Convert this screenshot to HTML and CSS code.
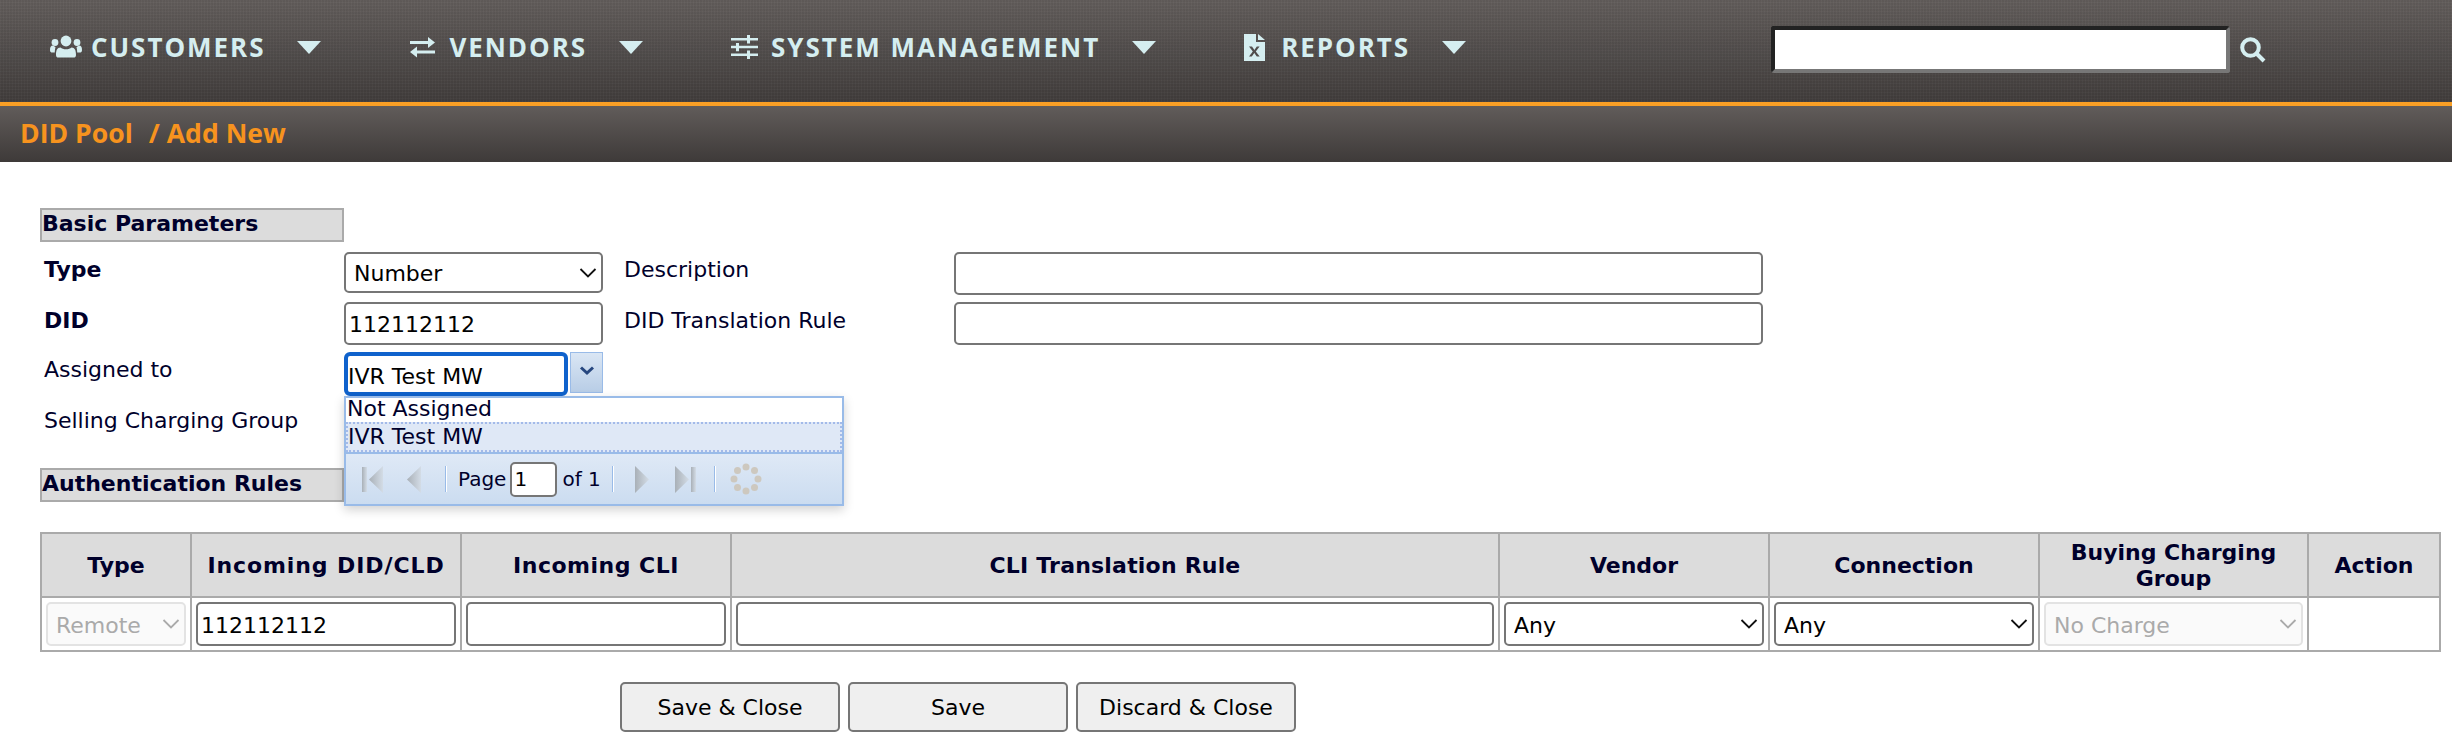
FILE: index.html
```html
<!DOCTYPE html>
<html lang="en">
<head>
<meta charset="utf-8">
<title>DID Pool / Add New</title>
<link rel="stylesheet" href="styles.css">
</head>
<body>
<svg class="defs" aria-hidden="true"><defs><linearGradient id="pgGrad" x1="0" y1="0" x2="1" y2="0"><stop offset="0" stop-color="#a9b0b7"/><stop offset="1" stop-color="#d3dce6"/></linearGradient></defs></svg>
<header class="topbar">
  <nav class="nav">
    <a class="nav-item">
      <svg class="nav-icon icon-users" viewBox="0 0 32 24"><circle cx="16" cy="6" r="5.4"/><circle cx="5" cy="7.5" r="3.4"/><circle cx="27" cy="7.5" r="3.4"/><path d="M8.5 22.5c-1.6 0-2.5-1-2.5-2.6 0-4.400 1.200-7.400 4.500-7.400 1.200 1 3.200 1.800 5.500 1.800s4.300-.8 5.500-1.800c3.300 0 4.500 3 4.500 7.400 0 1.600-.9 2.600-2.500 2.600z"/><path d="M5.500 12c-.3 1.600-.7 3.300-.7 5.600H2.400C.9 17.600 0 16.700 0 15.200c0-3 .8-4.600 3-4.600.7.700 1.500 1.100 2.500 1.400zM26.500 12c.3 1.600.7 3.300.7 5.600h2.400c1.500 0 2.400-.9 2.400-2.400 0-3-.8-4.600-3-4.600-.7.700-1.500 1.100-2.500 1.400z"/></svg>
      <span class="nav-label">CUSTOMERS</span><i class="nav-caret"></i>
    </a>
    <a class="nav-item">
      <svg class="nav-icon icon-exch" viewBox="0 0 27 22"><path d="M1 5h18V1l7 5.500-7 5.500V8H1zM26 11.500v3H8V10.500L1 16l7 5.500v-4h18z"/></svg>
      <span class="nav-label">VENDORS</span><i class="nav-caret"></i>
    </a>
    <a class="nav-item">
      <svg class="nav-icon icon-sliders" viewBox="0 0 27 24"><path d="M0 3h16V0h3v3h8v2.500h-8v3h-3v-3H0zM0 10.800h5V8h3v2.800h19v2.500H8v3H5v-3H0zM0 18.500h16v-3h3v3h8V21h-8v3h-3v-3H0z"/></svg>
      <span class="nav-label">SYSTEM MANAGEMENT</span><i class="nav-caret"></i>
    </a>
    <a class="nav-item">
      <svg class="nav-icon icon-file" viewBox="0 0 21 27"><path fill-rule="evenodd" d="M0 0h12v8h9v19H0zM14 0l7 6h-7zM5 12.500l3.800 5-3.800 5h2.800l2.500-3.500 2.500 3.500h2.900l-3.900-5 3.800-5h-2.800l-2.400 3.400-2.400-3.400z"/></svg>
      <span class="nav-label">REPORTS</span><i class="nav-caret"></i>
    </a>
  </nav>
  <div class="search">
    <input class="search-input" type="text" aria-label="Search">
    <svg class="search-icon" viewBox="0 0 26 26"><circle cx="10.500" cy="10.500" r="8.300"/><path d="M16.500 16.500l7.500 7.500"/></svg>
  </div>
</header>
<div class="crumbs"><span>DID Pool</span><span class="crumb-sep">/ Add New</span></div>

<main class="content">
  <h2 class="section-title">Basic Parameters</h2>
  <div class="form-grid">
    <label class="lbl lbl-b">Type</label>
    <div class="select-wrap type-sel"><select class="field sel"><option>Number</option></select><svg class="chev" viewBox="0 0 18 10"><path d="M1.500 1l7.500 7.500L16.500 1"/></svg></div>
    <label class="lbl lbl-desc">Description</label>
    <input class="field wide" type="text">

    <label class="lbl lbl-b lbl-did">DID</label>
    <input class="field" type="text" value="112112112">
    <label class="lbl lbl-desc lbl-did">DID Translation Rule</label>
    <input class="field wide" type="text">

    <label class="lbl">Assigned to</label>
    <div class="combo">
      <input class="combo-input" type="text" value="IVR Test MW">
      <div class="combo-btn"><svg viewBox="0 0 16 10"><path d="M2 1.500l6 5.500 6-5.500"/></svg></div>
      <div class="dropdown">
        <div class="dd-item">Not Assigned</div>
        <div class="dd-item dd-sel">IVR Test MW</div>
        <div class="pager">
          <svg class="pg pg-first" viewBox="0 0 21 29"><rect x="0" y="2" width="5" height="25"/><path d="M21 1v27L7 14.500z"/></svg>
          <svg class="pg pg-prev" viewBox="0 0 14 29"><path d="M14 1v27L0 14.500z"/></svg>
          <i class="pg-sep sep1"></i>
          <span class="pg-txt">Page</span>
          <input class="pg-input" type="text" value="1">
          <span class="pg-txt">of 1</span>
          <i class="pg-sep sep2"></i>
          <svg class="pg pg-next" viewBox="0 0 14 29"><path d="M0 1v27l14-13.500z"/></svg>
          <svg class="pg pg-last" viewBox="0 0 21 29"><path d="M0 1v27l14-13.500z"/><rect x="16" y="2" width="5" height="25"/></svg>
          <i class="pg-sep sep3"></i>
          <svg class="pg-load" viewBox="0 0 32 32"><circle cx="16" cy="4" r="3.500"/><circle cx="24.500" cy="7.500" r="3.500"/><circle cx="28" cy="16" r="3.500"/><circle cx="24.500" cy="24.500" r="3.500"/><circle cx="16" cy="28" r="3.500"/><circle cx="7.500" cy="24.500" r="3.500"/><circle cx="4" cy="16" r="3.500"/><circle cx="7.500" cy="7.500" r="3.500"/></svg>
        </div>
      </div>
    </div>
    <span class="filler"></span>

    <label class="lbl">Selling Charging Group</label>
  </div>

  <h2 class="section-title">Authentication Rules</h2>
  <table class="rules">
    <colgroup>
      <col class="c1"><col class="c2"><col class="c3"><col class="c4"><col class="c5"><col class="c6"><col class="c7"><col class="c8">
    </colgroup>
    <thead>
      <tr><th>Type</th><th class="wide-a">Incoming DID/CLD</th><th class="wide-b">Incoming CLI</th><th class="wide-c">CLI Translation Rule</th><th>Vendor</th><th>Connection</th><th>Buying Charging Group</th><th>Action</th></tr>
    </thead>
    <tbody>
      <tr>
        <td><div class="select-wrap"><select class="field sel" disabled><option>Remote</option></select><svg class="chev chev-off" viewBox="0 0 18 10"><path d="M1.500 1l7.500 7.500L16.500 1"/></svg></div></td>
        <td><input class="field" type="text" value="112112112"></td>
        <td><input class="field" type="text"></td>
        <td><input class="field" type="text"></td>
        <td><div class="select-wrap"><select class="field sel"><option>Any</option></select><svg class="chev" viewBox="0 0 18 10"><path d="M1.500 1l7.500 7.500L16.500 1"/></svg></div></td>
        <td><div class="select-wrap"><select class="field sel"><option>Any</option></select><svg class="chev" viewBox="0 0 18 10"><path d="M1.500 1l7.500 7.500L16.500 1"/></svg></div></td>
        <td><div class="select-wrap"><select class="field sel" disabled><option>No Charge</option></select><svg class="chev chev-off" viewBox="0 0 18 10"><path d="M1.500 1l7.500 7.500L16.500 1"/></svg></div></td>
        <td></td>
      </tr>
    </tbody>
  </table>
  <div class="actions">
    <button class="btn" type="button">Save &amp; Close</button>
    <button class="btn" type="button">Save</button>
    <button class="btn" type="button">Discard &amp; Close</button>
  </div>
</main>
</body>
</html>
```
FILE: styles.css
```css
* { box-sizing: border-box; }
html, body { margin: 0; padding: 0; background: #fff; }
body {
  font-family: "DejaVu Sans", Verdana, sans-serif;
  font-size: 22px;
  color: #00002b;
  overflow: hidden;
}
.defs { width: 0; height: 0; display: block; }

/* top navigation */
.topbar {
  height: 106px;
  border-bottom: 4px solid #f99f25;
  display: flex;
  align-items: flex-start;
  background:
    repeating-linear-gradient(90deg, rgba(255,255,255,.018) 0 1px, rgba(0,0,0,.018) 1px 3px),
    repeating-linear-gradient(0deg, rgba(255,255,255,.018) 0 1px, rgba(0,0,0,.018) 1px 3px),
    linear-gradient(#625d5b, #403c3b);
}
.nav { display: flex; align-items: center; height: 94px; padding-left: 50px; width: 1771px; }
.nav-item { display: flex; align-items: center; color: #d5eef0; margin-right: 88px; }
.nav-icon { fill: #d5eef0; display: block; margin-right: 12px; }
.icon-users { width: 32px; height: 24px; margin-right: 9px; }
.icon-exch { width: 27px; height: 22px; margin-right: 13px; }
.icon-sliders { width: 27px; height: 24px; margin-right: 13px; }
.icon-file { width: 21px; height: 27px; margin-right: 16px; }
.nav-label {
  font-family: "Open Sans", sans-serif;
  font-weight: 700;
  font-size: 26px;
  line-height: 34px;
  letter-spacing: 1.950px;
  white-space: nowrap;
}
.nav-caret {
  width: 0; height: 0;
  margin-left: 32px;
  border-left: 12px solid transparent;
  border-right: 12px solid transparent;
  border-top: 13px solid #d5eef0;
}
.search { display: flex; align-items: center; padding-top: 26px; }
.search-input {
  width: 459px; height: 47px;
  border-style: solid;
  border-width: 4px;
  border-color: #222 #777 #777 #222;
  border-radius: 3px;
  background: #fff;
}
.search-icon { width: 26px; height: 26px; margin-left: 10px; fill: none; stroke: #d5eef0; stroke-width: 4; }

.crumbs {
  height: 56px;
  padding: 0 0 2px 20px;
  display: flex;
  align-items: center;
  gap: 16px;
  font-family: "Open Sans", sans-serif;
  font-weight: 700;
  font-size: 26.600px;
  color: #f7931e;
  background: linear-gradient(#615c5a, #3e3a39);
}

/* form */
.content { padding: 46px 12px 0 40px; }
.section-title {
  margin: 0;
  width: 304px;
  height: 34px;
  border: 2px solid #aaa;
  background: #dcdcdc;
  padding-left: 0;
  font-size: 22px;
  line-height: 28px;
  font-weight: 700;
  white-space: nowrap;
}
.form-grid {
  display: grid;
  grid-template-columns: 304px 259px 351px 809px;
  grid-template-rows: 43px 43px 44px 72px;
  row-gap: 7px;
  margin-top: 10px;
  height: 216px;
}
.lbl { padding: 4px 0 0 4px; line-height: 28px; white-space: nowrap; }
.lbl-b { font-weight: 700; }
.lbl-desc { padding-left: 21px; }
.lbl-did { padding-top: 5px; }
.field {
  display: block;
  width: 100%;
  height: 100%;
  border: 2px solid #767676;
  border-radius: 5px;
  background: #fff;
  padding: 2px 3px 0;
  font: 22px "DejaVu Sans", Verdana, sans-serif;
  color: #000;
  outline: 0;
}
.sel { appearance: none; -webkit-appearance: none; padding-left: 8px; }
.sel:disabled { border-color: #e3e3e3; background: #fafafa; color: #aaa; opacity: 1; }
.select-wrap { position: relative; height: 100%; }
.type-sel { height: 41px; }
.chev {
  position: absolute; right: 6px; top: 50%;
  width: 18px; height: 10px; margin-top: -5px;
  fill: none; stroke: #111; stroke-width: 1.800;
  pointer-events: none;
}
.chev-off { stroke: #aaa; }
.filler { grid-column: span 2; }

.combo { position: relative; display: flex; align-items: stretch; gap: 2px; z-index: 2; }
.combo-input {
  width: 224px;
  border: 4px solid #0f62cc;
  border-radius: 6px;
  padding: 5px 0 0 0;
  font: 22px "DejaVu Sans", Verdana, sans-serif;
  color: #000;
  outline: 0;
}
.combo-btn {
  width: 33px; height: 41px;
  border: 1px solid #99bbe8;
  background: linear-gradient(#dae6f4, #b8cde6);
  display: flex; justify-content: center; padding-top: 13px;
}
.combo-btn svg { width: 16px; height: 10px; fill: none; stroke: #27477f; stroke-width: 3; }
.dropdown {
  position: absolute; left: 0; top: 44px;
  width: 500px;
  border: 2px solid #99bbe8;
  background: #fff;
  box-shadow: 0 4px 10px rgba(0,0,0,.18);
  font-size: 22px;
  line-height: 26px;
}
.dd-item { height: 24px; padding-left: 1px; line-height: 21px; white-space: nowrap; }
.dd-sel { height: 30px; background: #dfe8f6; border: 2px dotted #a3bae9; line-height: 26px; padding-left: 0; }
.pager {
  height: 52px;
  border-top: 2px solid #99bbe8;
  background: linear-gradient(#dfe9f6, #cbdcf0);
  display: flex; align-items: center;
  padding-left: 16px;
  font-size: 20px;
}
.pg { height: 29px; fill: url(#pgGrad); flex: none; }
.pg-first, .pg-last { width: 21px; }
.pg-prev, .pg-next { width: 14px; }
.pg-prev { margin-left: 24px; }
.pg-last { margin-left: 26px; }
.pg-sep { width: 2px; height: 26px; flex: none; background: linear-gradient(90deg, #99bbe8 50%, #fff 50%); }
.sep1 { margin: 0 11px 0 24px; }
.sep2 { margin: 0 21px 0 11px; }
.sep3 { margin: 0 14px 0 18px; }
.pg-txt { white-space: nowrap; color: #00002b; }
.pg-input {
  width: 47px; height: 35px; margin: 0 5px 0 4px;
  border: 2px solid #767676; border-radius: 5px;
  padding: 0 0 0 2px;
  font: 20px "DejaVu Sans", Verdana, sans-serif;
  color: #000;
}
.pg-load { width: 32px; height: 32px; fill: #cdc8bf; flex: none; }

/* rules table */
.rules {
  margin-top: 30px;
  width: 2399px;
  table-layout: fixed;
  border-collapse: collapse;
}
.c1 { width: 150px; } .c2 { width: 270px; } .c3 { width: 270px; } .c4 { width: 768px; }
.c5 { width: 270px; } .c6 { width: 270px; } .c7 { width: 269px; } .c8 { width: 132px; }
.rules th, .rules td { border: 2px solid #aaa; }
.rules th {
  height: 64px;
  background: #dcdcdc;
  font-size: 22px;
  line-height: 26px;
  font-weight: 700;
  padding: 1px 4px 0;
  text-align: center;
}
.rules th.wide-a { letter-spacing: .9px; }
.rules th.wide-b { letter-spacing: .5px; }
.rules th.wide-c { letter-spacing: .2px; }
.rules td { height: 54px; padding: 3px 4px; }
.rules td .field, .rules td .select-wrap { height: 44px; }

.actions { display: flex; gap: 8px; margin: 30px 0 0 580px; }
.btn {
  width: 220px; height: 50px;
  border: 2px solid #767676;
  border-radius: 5px;
  background: #efefef;
  font: 22px "DejaVu Sans", Verdana, sans-serif;
  color: #000;
}
```
